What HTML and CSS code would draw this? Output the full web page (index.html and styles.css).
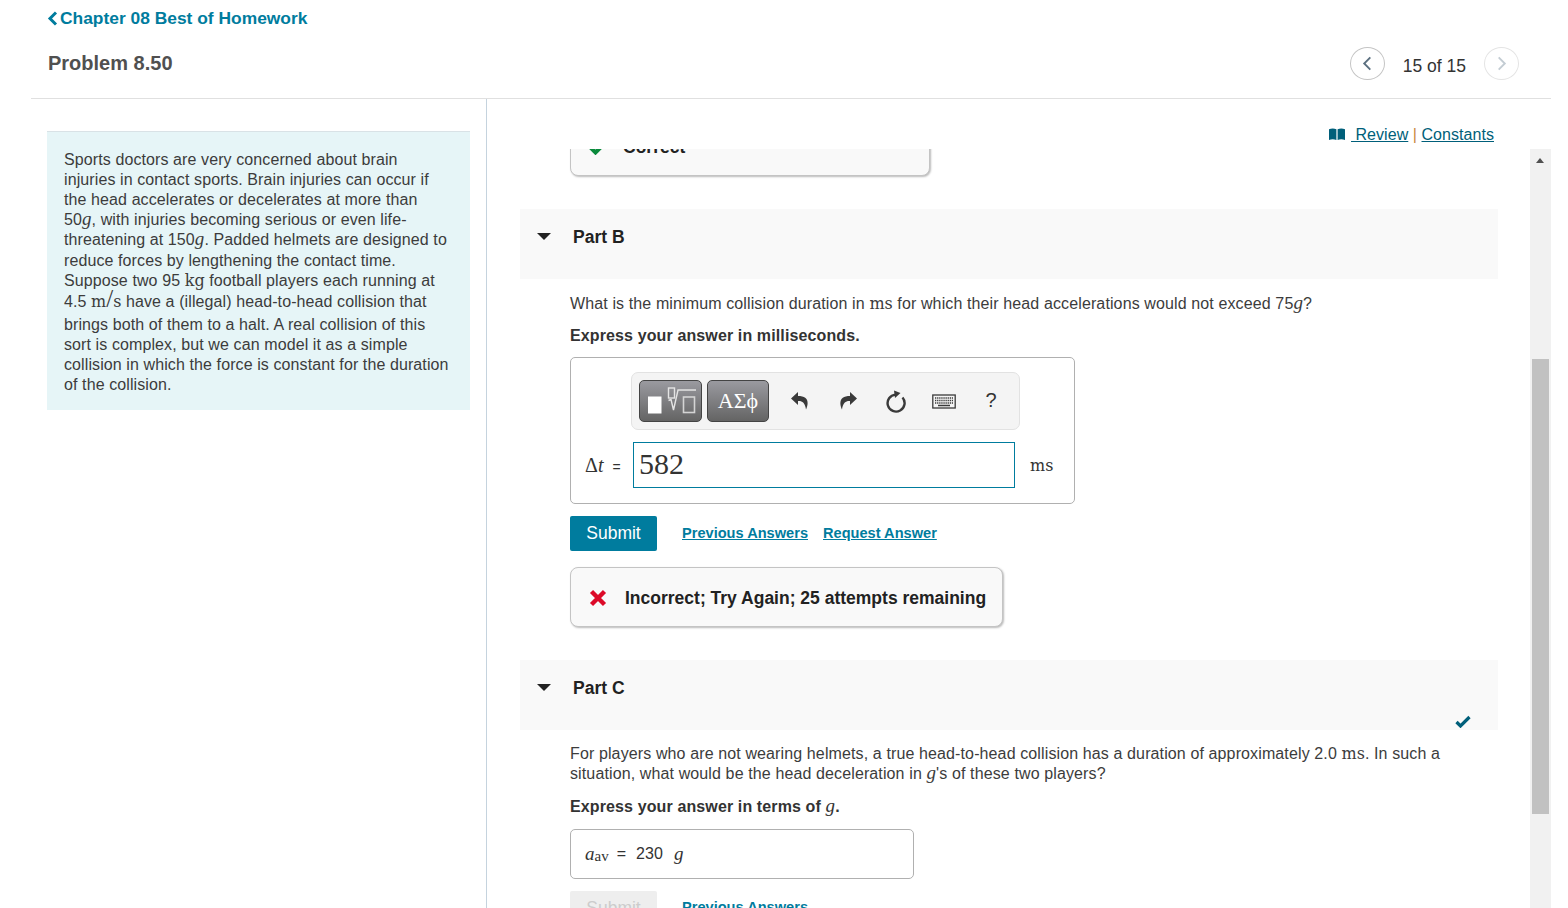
FILE: index.html
```html
<!DOCTYPE html>
<html lang="en">
<head>
<meta charset="utf-8">
<title>Problem 8.50</title>
<link rel="stylesheet" href="styles.css">
</head>
<body>
<div class="page">
  <header class="header">
    <a class="back" href="#"><svg class="back-icon" viewBox="0 0 11 15"><path d="M9 1.500 3 7.500l6 6" fill="none" stroke="#007c9e" stroke-width="3"/></svg>Chapter 08 Best of Homework</a>
    <div class="title-row">
      <h1 class="title">Problem 8.50</h1>
      <nav class="pager">
        <span class="circle"><svg viewBox="0 0 35 33" class="circle-icon"><path d="M20.500 10 14 16.500l6.500 6.500" fill="none" stroke="#5c7080" stroke-width="2"/></svg></span>
        <span class="count">15 of 15</span>
        <span class="circle circle-off"><svg viewBox="0 0 35 33" class="circle-icon"><path d="M14.500 10 21 16.500 14.500 23" fill="none" stroke="#c3ccd3" stroke-width="2"/></svg></span>
      </nav>
    </div>
  </header>
  <main class="main">
    <aside class="left">
      <div class="passage">Sports doctors are very concerned about brain injuries in contact sports. Brain injuries can occur if the head accelerates or decelerates at more than 50<i class="m">g</i>, with injuries becoming serious or even life-threatening at 150<i class="m drop">g</i>. Padded helmets are designed to reduce forces by lengthening the contact time. Suppose two 95 <span class="u drop drop-kg">kg</span> football players each running at 4.5 <span class="u drop drop-more">m<span class="slash">/</span>s</span> have a (illegal) head-to-head collision that brings both of them to a halt. A real collision of this sort is complex, but we can model it as a simple collision in which the force is constant for the duration of the collision.</div>
    </aside>
    <section class="right">
      <div class="links"><svg class="book" viewBox="0 0 16 12"><path d="M0 1.200C2.500 .2 5 .2 7.400 1.200V12C5 11 2.500 11 0 12zM8.600 1.200C11 .2 13.500 .2 16 1.200V12C13.500 11 11 11 8.600 12z" fill="#005f7a"/></svg><a href="#">&nbsp;Review</a> <span class="pipe">|</span> <a href="#">Constants</a></div>
      <div class="scroller">
        <div class="content">
          <div class="inner">
            <div class="feedback feedback-correct"><svg class="fb-icon" viewBox="0 0 20 16"><path d="M2 8l5.500 5.500L18 3" fill="none" stroke="#0a8a3c" stroke-width="4"/></svg><span>Correct</span></div>

            <div class="part"><span class="caret"></span>Part B</div>
            <div class="part-body">
              <p class="q">What is the minimum collision duration in <span class="u">ms</span> for which their head accelerations would not exceed 75<i class="m">g</i>?</p>
              <p class="express">Express your answer in milliseconds.</p>
              <div class="answer">
                <div class="toolbar">
                  <span class="tool-btn tool-btn-a"><svg viewBox="0 0 61 40" class="tool-svg"><rect x="8" y="15.500" width="13.500" height="17" fill="#fff"/><rect x="28.500" y="7" width="6" height="10" fill="none" stroke="#e4e4e4" stroke-width="1.400"/><path d="M28.500 19.500l2.500-1 2.500 10.500L38 9h18" fill="none" stroke="#e4e4e4" stroke-width="1.400"/><rect x="43.500" y="16" width="11" height="15.500" fill="none" stroke="#d4d4d4" stroke-width="1.600"/></svg></span>
                  <span class="tool-btn tool-btn-b">ΑΣϕ</span>
                  <div class="tools">
                    <svg class="tool" viewBox="0 0 24 24"><path d="M10 3 3 9.500l7 6.500v-4c4-.3 7 1.500 8 8.500 2-4 2.500-9-.5-11.500-2-1.600-4.500-2-7.500-2z" fill="#3a3a3a"/></svg>
                    <svg class="tool" viewBox="0 0 24 24"><path d="M14 3l7 6.500-7 6.500v-4c-4-.3-7 1.500-8 8.500-2-4-2.500-9 .5-11.500 2-1.600 4.500-2 7.500-2z" fill="#3a3a3a"/></svg>
                    <svg class="tool" viewBox="0 0 24 24"><path d="M11.500 5.600A8.500 8.500 0 1 0 18.500 8.500" fill="none" stroke="#3a3a3a" stroke-width="2.400"/><path d="M10 1.500l6.500 2.500-5.500 5z" fill="#3a3a3a"/></svg>
                    <svg class="tool" viewBox="0 0 24 24"><rect x=".8" y="6" width="22.400" height="13" fill="none" stroke="#3a3a3a" stroke-width="1.300"/><path d="M3 9h18M3 11.500h18M3 14h18" stroke="#3a3a3a" stroke-width="1.400" stroke-dasharray="1.300 .8"/><path d="M6 16.500h12" stroke="#3a3a3a" stroke-width="1.500"/></svg>
                    <span class="tool-q">?</span>
                  </div>
                </div>
                <div class="input-row">
                  <span class="label"><span class="serif">Δ</span><i class="m">t</i><span class="label-eq">=</span></span>
                  <span class="input">582</span>
                  <span class="unit">ms</span>
                </div>
              </div>
              <div class="actions">
                <a class="submit" href="#">Submit</a>
                <a class="action" href="#">Previous Answers</a>
                <a class="action" href="#">Request Answer</a>
              </div>
              <div class="feedback"><svg class="fb-icon" viewBox="0 0 18 18"><path d="M2.500 2.500l13 13M15.500 2.500l-13 13" stroke="#dc0a28" stroke-width="4.400"/></svg><span>Incorrect; Try Again; 25 attempts remaining</span></div>
            </div>

            <div class="part"><span class="caret"></span>Part C<svg class="check" viewBox="0 0 16 13"><path d="M1.500 7l4 4L14.500 2" fill="none" stroke="#005f7a" stroke-width="3.200"/></svg></div>
            <div class="part-body">
              <p class="q q-c">For players who are not wearing helmets, a true head-to-head collision has a duration of approximately 2.0 <span class="u">ms</span>. In such a situation, what would be the head deceleration in <i class="m">g</i>'s of these two players?</p>
              <p class="express express-c">Express your answer in terms of <i class="m m-regular">g</i>.</p>
              <div class="answer-c"><i class="m">a</i><span class="sub">av</span><span class="eq">=</span><span class="val">230</span><i class="m">g</i></div>
              <div class="actions">
                <span class="submit submit-off">Submit</span>
                <a class="action" href="#">Previous Answers</a>
              </div>
            </div>
          </div>
        </div>
        <div class="scrollbar"><span class="arrow"></span><span class="thumb"></span></div>
      </div>
    </section>
  </main>
</div>
</body>
</html>
```

FILE: styles.css
```css
* { box-sizing: border-box; }
html, body { margin: 0; height: 908px; overflow: hidden; background: #fff; }
body { font-family: "Liberation Sans", Arial, sans-serif; font-size: 16px; color: #333; }
a { color: inherit; }
p { margin: 0; }

.page { width: 1551px; height: 908px; padding-left: 31px; display: flex; flex-direction: column; }

.header { height: 99px; border-bottom: 1px solid #e0e0e0; padding-left: 17px; flex: none; }
.back { display: flex; align-items: center; height: 18px; margin-top: 9px; font-size: 17.400px; font-weight: bold; color: #007c9e; text-decoration: none; }
.back-icon { width: 11px; height: 15px; margin-left: -1px; margin-right: 2px; }
.title-row { display: flex; justify-content: space-between; align-items: flex-start; margin-top: 17px; padding-right: 32px; }
.title { margin: 0; font-size: 20px; line-height: 38px; font-weight: bold; color: #505050; }
.pager { display: flex; align-items: center; margin-top: 3px; }
.circle { width: 35px; height: 33px; border: 1px solid #c4c4c4; border-radius: 50%; display: block; }
.circle-off { border-color: #e4e4e4; }
.circle-icon { display: block; width: 33px; height: 31px; }
.count { font-size: 17.500px; margin: 6px 18px 0; color: #333; }

.main { flex: 1; display: flex; min-height: 0; }
.left { width: 456px; flex: none; border-right: 1px solid #c5d3de; padding: 32px 16px 0 16px; }
.passage { width: 423px; height: 279px; background: #e6f5f7; border-top: 1px solid #d9e2e6; padding: 18px 20px 10px 17px; line-height: 20px; font-size: 16px; letter-spacing: .1px; color: #3c3c3c; }
.m { font-family: "Liberation Serif", "DejaVu Serif", serif; font-style: italic; font-size: 19px; line-height: 0; }
.m-regular { font-weight: normal; }
.u { font-family: "DejaVu Serif", "Liberation Serif", serif; font-size: 16px; letter-spacing: 0; line-height: 0; }
.drop { display: inline-block; line-height: 17px; margin-bottom: 3.700px; }
.drop-kg { margin-bottom: 3.700px; }
.drop-more { margin-bottom: 4.500px; }
.slash { font-family: "Liberation Serif", serif; font-size: 25px; line-height: 0; }
.serif { font-family: "Liberation Serif", serif; }

.right { flex: 1; min-width: 0; display: flex; flex-direction: column; }
.links { height: 50px; padding: 26px 57px 0 0; text-align: right; line-height: 20px; letter-spacing: .05px; color: #005f7a; flex: none; }
.book { width: 16px; height: 12px; margin-right: 6px; }
.pipe { color: #c98a3c; }
.scroller { flex: 1; min-height: 0; display: flex; }
.content { flex: 1; min-width: 0; overflow: hidden; }
.inner { margin-top: -33px; padding-left: 33px; width: 1011px; }

.feedback { display: flex; align-items: center; margin-left: 50px; width: 360px; height: 60px; background: #f9f9f9; border: 1px solid #c4c4c4; border-radius: 8px; box-shadow: 1px 1px 2px #bbb; padding: 2px 0 0 17px; font-size: 17.500px; font-weight: bold; color: #222; }
.part-body .feedback { margin: 16px 0 0; width: 433px; }
.fb-icon { width: 20px; height: 18px; margin-right: 17px; }
.feedback-correct .fb-icon { height: 16px; margin-right: 15px; }

.part { position: relative; height: 70px; margin-top: 33px; background: #f9f9f9; padding: 18px 0 0 53px; font-size: 17.500px; line-height: 20px; font-weight: bold; color: #222; width: 978px; }
.caret { position: absolute; left: 17px; top: 24px; border: 7px solid transparent; border-top: 7px solid #222; border-bottom: 0; }
.check { position: absolute; left: 935px; top: 55px; width: 16px; height: 13px; }
.part-body { padding-left: 50px; width: 970px; }
.q { margin-top: 14.500px; line-height: 20px; letter-spacing: .12px; color: #3c3c3c; }
.q-c { margin-top: 13.500px; }
.express { margin-top: 12px; line-height: 20px; font-weight: bold; letter-spacing: .12px; color: #333; }
.express-c { margin-top: 13px; }

.answer { width: 505px; height: 147px; margin-top: 11.500px; border: 1px solid #b0b0b0; border-radius: 5px; padding: 14px 0 0 60px; }
.toolbar { width: 389px; height: 58px; background: #f4f4f4; border: 1px solid #e2e2e2; border-radius: 7px; padding: 7px; display: flex; gap: 5px; }
.tool-btn { height: 42px; border: 1px solid #444; border-radius: 5px; background: linear-gradient(#9a9aa0, #646464); color: #fff; display: flex; align-items: center; justify-content: center; }
.tool-btn-a { width: 63px; }
.tool-svg { width: 61px; height: 40px; display: block; }
.tool-btn-b { width: 62px; font-family: "Liberation Serif", serif; font-size: 22px; }
.tools { display: flex; align-items: center; gap: 24px; margin-left: 14px; }
.tool { width: 24px; height: 24px; display: block; }
.tool-q { font-size: 20px; color: #333; width: 24px; text-align: center; margin: -2px 0 0 -1px; }
.input-row { display: flex; align-items: center; margin: 12px 0 0 -46px; }
.label { width: 48px; font-size: 14px; white-space: nowrap; }
.label .serif, .label .m { font-size: 20px; }
.label-eq { margin-left: 9px; }
.input { width: 382px; height: 46px; border: 1px solid #007c9e; padding-left: 5px; font-family: "Liberation Serif", serif; font-size: 30px; line-height: 42px; color: #333; }
.unit { margin-left: 15px; font-family: "DejaVu Serif", serif; font-size: 16px; }

.actions { display: flex; align-items: center; margin-top: 12px; }
.submit { display: flex; align-items: center; justify-content: center; width: 87px; height: 35px; background: #007c9e; color: #fff; border-radius: 2px; font-size: 17.500px; text-decoration: none; margin-right: 25px; }
.submit-off { background: #eee; color: #ccc; }
.action { font-size: 14.600px; font-weight: bold; color: #007c9e; margin: -2px 15px 0 0; }

.answer-c { display: flex; align-items: center; width: 344px; height: 50px; margin-top: 12px; border: 1px solid #b0b0b0; border-radius: 5px; padding: 1px 0 0 14px; }
.sub { font-family: "Liberation Serif", serif; font-size: 15px; margin-top: 5px; }
.eq { margin: 0 10px 0 8px; }
.val { margin-right: 11px; letter-spacing: .1px; }

.scrollbar { width: 21px; flex: none; background: #f1f1f1; position: relative; padding: 0 2px; display: flex; flex-direction: column; }
.arrow { position: absolute; left: 6px; top: 9px; border: 4.500px solid transparent; border-bottom: 5px solid #505050; border-top: 0; }
.thumb { display: block; height: 455px; margin-top: 210px; background: #c1c1c1; }
```
